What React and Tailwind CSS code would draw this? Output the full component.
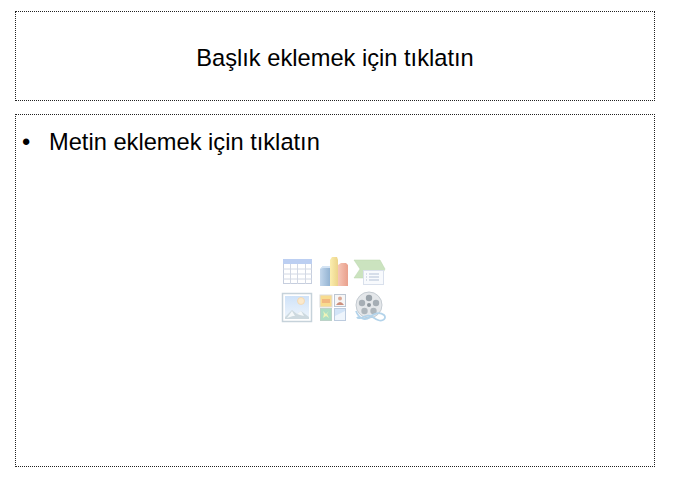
function Icons() {
  return (
    <svg width="106" height="68" viewBox="281 256 106 68" className="block">
      <defs>
        <linearGradient id="y" x1="0" x2="1" y1="0" y2="0"><stop offset="0" stopColor="#fbeeb0" /><stop offset="1" stopColor="#ecd48a" /></linearGradient>
        <linearGradient id="b" x1="0" x2="1" y1="0" y2="0"><stop offset="0" stopColor="#c3d7ec" /><stop offset="1" stopColor="#93b3d2" /></linearGradient>
        <linearGradient id="r" x1="0" x2="1" y1="0" y2="0"><stop offset="0" stopColor="#f6c6b6" /><stop offset="1" stopColor="#e9a08c" /></linearGradient>
        <linearGradient id="s" x1="0" x2="0" y1="0" y2="1"><stop offset="0" stopColor="#cfe2f8" /><stop offset="1" stopColor="#eef5fc" /></linearGradient>
        <filter id="soft" x="-5%" y="-5%" width="110%" height="110%"><feGaussianBlur stdDeviation="0.35" /></filter>
      </defs>
      <g filter="url(#soft)">
        {/* table */}
        <rect x="283.500" y="259.500" width="28" height="24" fill="#fff" stroke="#c6cede" />
        <rect x="283" y="259" width="29" height="5" fill="#bccff2" />
        <path d="M283 269h29M283 274h29M283 279h29M290.500 264v20M297.500 264v20M305.500 264v20" stroke="#d2d8e4" strokeWidth="1" fill="none" />
        {/* chart */}
        <path d="M320 269l3-3h5l2 2v18h-10z" fill="url(#b)" />
        <path d="M320 269l3-3h7v2h-7z" fill="#d4e4f4" />
        <path d="M330 260l2-3h5l1 3v26h-8z" fill="url(#y)" />
        <path d="M338 265l3-2h5l2 2v21h-10z" fill="url(#r)" />
        {/* smartart */}
        <path d="M354 260h26l5 9-5 9h-26l6-9z" fill="#cbe3bf" stroke="#b8d4ac" strokeWidth="0.500" />
        <rect x="363.500" y="270.500" width="20" height="14" fill="#f8fafd" stroke="#d9e0ec" />
        <path d="M369 274h10M369 277h10M369 280h10M366 274h1M366 277h1M366 280h1" stroke="#b4c1d6" strokeWidth="1" />
        {/* picture */}
        <rect x="282.500" y="293.500" width="29" height="28" fill="#fff" stroke="#c6d2da" strokeWidth="1.500" />
        <rect x="285" y="296" width="24" height="23" fill="url(#s)" />
        <circle cx="301" cy="301" r="3.500" fill="#fbe9cc" stroke="#f3d2a6" strokeWidth="0.700" />
        <path d="M285 317l7-7 5 4 4-3 8 6v2h-24z" fill="#cdd9df" />
        <path d="M287 318l5-7 3 5-3 0 5 0h-4zM297 314l4-3 3 5-4-1z" fill="#f4f8fa" />
        {/* clip art */}
        <rect x="320" y="295" width="12" height="12" fill="#f8dc90" stroke="#dcdcdc" />
        <rect x="322" y="299" width="8" height="4" fill="#f2b880" />
        <rect x="334.500" y="294.500" width="11" height="12" fill="#f6f6f6" stroke="#bcc6d2" />
        <circle cx="340" cy="298.500" r="2" fill="#dcaa96" />
        <path d="M336 305q4-6 8 0z" fill="#cc907e" />
        <rect x="320.500" y="308.500" width="11" height="12" fill="#addec4" stroke="#bcd2c8" />
        <path d="M323 311l3 3 3-3-2 3 2 4-3-2-3 2 1-4z" fill="#eef3b8" />
        <rect x="334.500" y="308.500" width="11" height="12" fill="#d2e4f7" stroke="#bccbde" />
        <path d="M335 316l10-5v9h-10z" fill="#eef5fc" />
        {/* film */}
        <circle cx="369" cy="305" r="13" fill="#e4e7ea" stroke="#c4cbd1" />
        <circle cx="369" cy="305" r="2" fill="#8f989f" />
        <circle cx="369" cy="298" r="3.200" fill="#9aa3aa" />
        <circle cx="376" cy="303" r="3.200" fill="#a6aeb5" />
        <circle cx="373.500" cy="311" r="3.200" fill="#aeb6bc" />
        <circle cx="364.500" cy="311" r="3.200" fill="#aeb6bc" />
        <circle cx="362" cy="303" r="3.200" fill="#a6aeb5" />
        <path d="M356 311c3 8 9 10 14 6s10-5 14-2c3 3-1 7-6 5s-7-6-12-4-8 3-9 1" fill="none" stroke="#b3d3ea" strokeWidth="1.800" />
      </g>
    </svg>
  );
}

export default function App() {
  return (
    <div className="w-[676px] h-[484px] bg-white pt-[11px] pl-[15px] text-black font-['Liberation_Sans',Arial,sans-serif]">
      <div className="w-[640px] h-[90px] border border-dotted border-[#222] flex items-center justify-center text-[23.66px] pt-[6px]">
        Başlık eklemek için tıklatın
      </div>
      <div className="w-[640px] h-[353px] mt-[13px] border border-dotted border-[#222] flex flex-col">
        <div className="flex text-[23.66px] leading-[27px] pt-[14px] pl-[6px]">
          <span className="w-[27px]">•</span>
          <span>Metin eklemek için tıklatın</span>
        </div>
        <div className="flex justify-center mt-[100px] pr-[2px]">
          <Icons />
        </div>
      </div>
    </div>
  );
}
